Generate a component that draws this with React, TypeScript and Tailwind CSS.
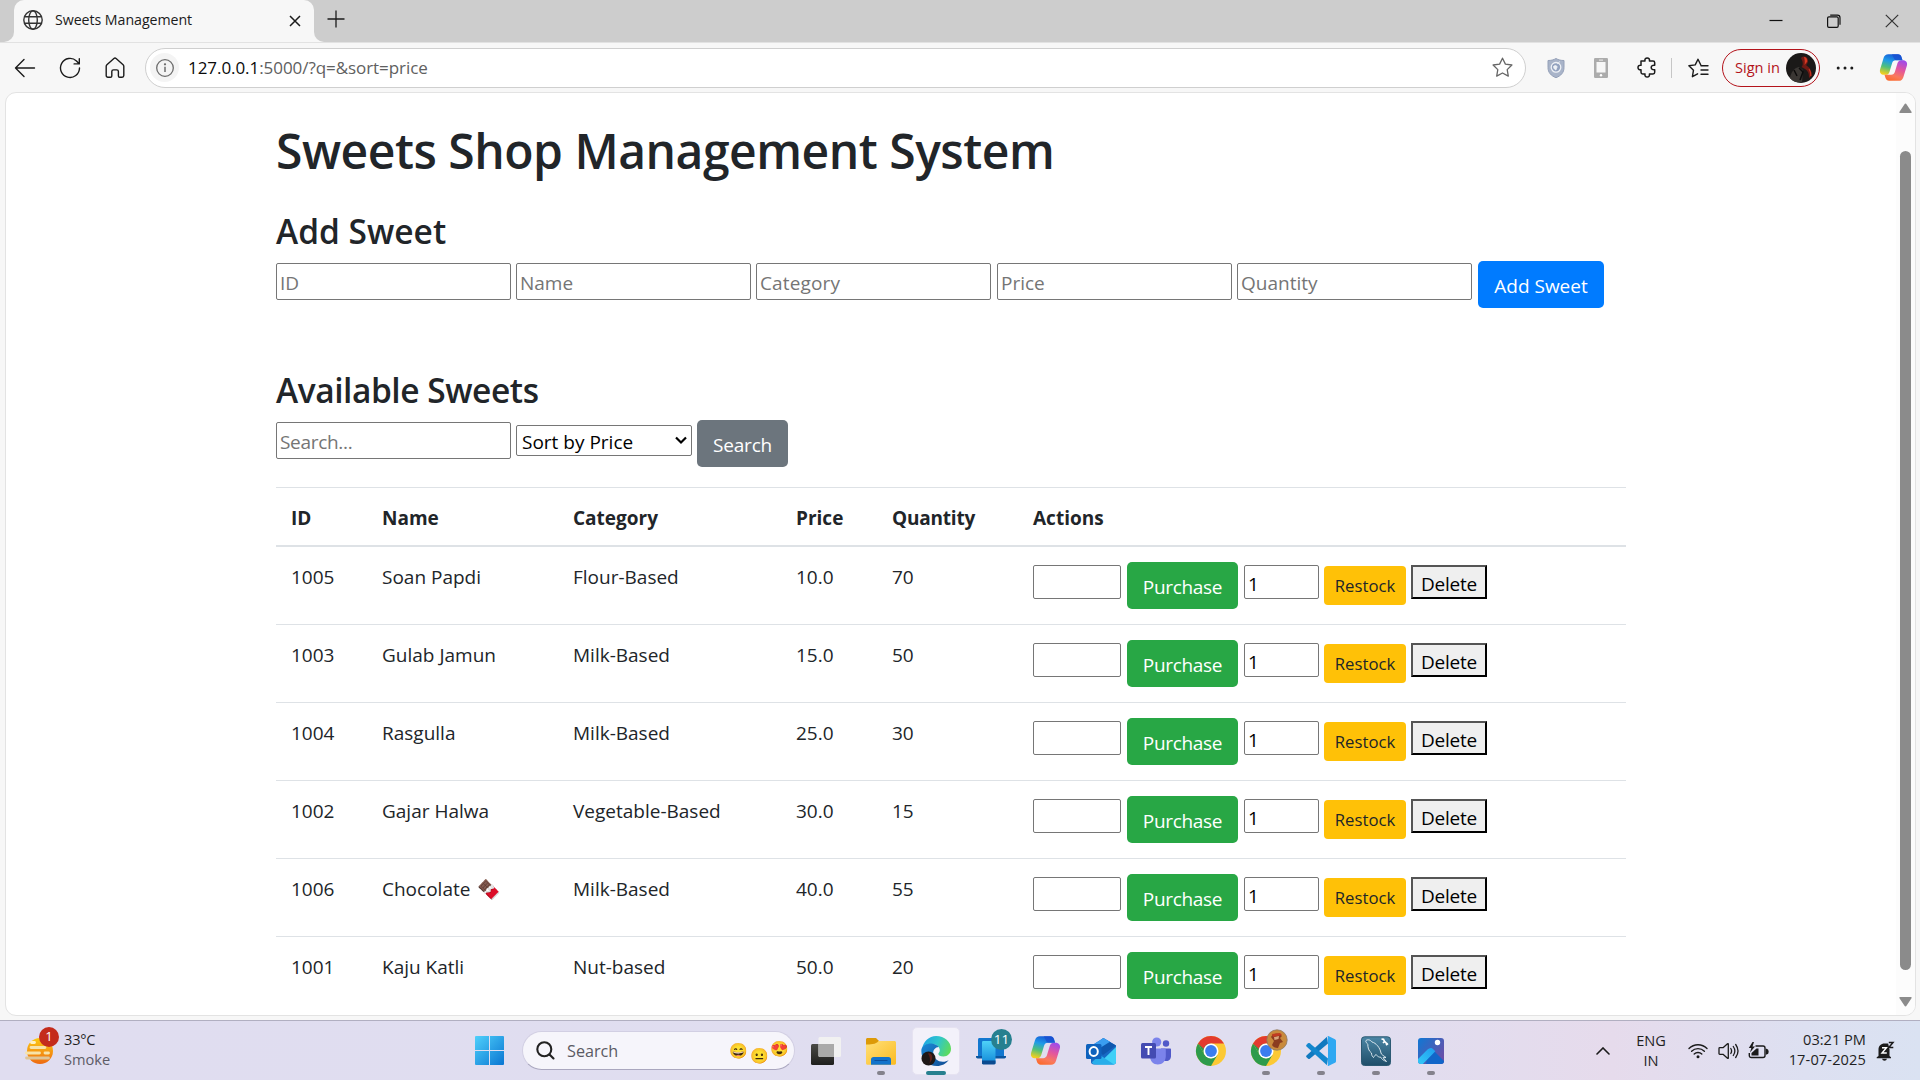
import type { ReactNode } from 'react';

type Sweet = { id: string; name: string; emoji?: string; category: string; price: string; quantity: string };

const SWEETS: Sweet[] = [
  { id: '1005', name: 'Soan Papdi', category: 'Flour-Based', price: '10.0', quantity: '70' },
  { id: '1003', name: 'Gulab Jamun', category: 'Milk-Based', price: '15.0', quantity: '50' },
  { id: '1004', name: 'Rasgulla', category: 'Milk-Based', price: '25.0', quantity: '30' },
  { id: '1002', name: 'Gajar Halwa', category: 'Vegetable-Based', price: '30.0', quantity: '15' },
  { id: '1006', name: 'Chocolate', emoji: '🍫', category: 'Milk-Based', price: '40.0', quantity: '55' },
  { id: '1001', name: 'Kaju Katli', category: 'Nut-based', price: '50.0', quantity: '20' },
];

const COLS = 'grid grid-cols-[92px_190px_223px_96px_141px_1fr] pl-[15px]';

/* ---------- shared drawings ---------- */

function Copilot({ size, id }: { size: number; id: string }) {
  const d =
    'M9 1.2h9.3c1.7 0 2.9 1 3.4 2.6l1 3.3h-6.5c-1.9 0-3 1-3.5 2.6l-2.6 8.6c-.6 1.8-1.8 2.8-3.6 2.8H5c-3.2 0-4.8-2.3-3.9-5.4L4.5 4.7C5.2 2.3 6.7 1.2 9 1.2z';
  return (
    <svg width={size} height={size} viewBox="0 0 28 28">
      <defs>
        <linearGradient id={id + 'a'} x1="0.6" y1="0" x2="0.3" y2="1">
          <stop offset="0" stopColor="#1659d6" />
          <stop offset="0.35" stopColor="#1f9be8" />
          <stop offset="0.65" stopColor="#4fc07a" />
          <stop offset="1" stopColor="#f5cf1d" />
        </linearGradient>
        <linearGradient id={id + 'b'} x1="0.3" y1="1" x2="0.7" y2="0">
          <stop offset="0" stopColor="#a14be8" />
          <stop offset="0.4" stopColor="#e2559f" />
          <stop offset="0.75" stopColor="#fa7a5c" />
          <stop offset="1" stopColor="#fb6b2f" />
        </linearGradient>
      </defs>
      <path d={d} fill={`url(#${id}a)`} />
      <path d={d} fill={`url(#${id}b)`} transform="rotate(180 14 14)" />
      <path d="M12.5 1.2h5.8c1.7 0 2.900 1 3.400 2.600l1 3.300h-5.400c-1.600 0-2.600-.8-3-2.300z" fill="#1a4fd0" opacity="0.75" />
    </svg>
  );
}

function Avatar({ size }: { size: number }) {
  return (
    <svg width={size} height={size} viewBox="0 0 30 30">
      <circle cx="15" cy="15" r="15" fill="#1b1918" />
      <path d="M4 25c1-6 4-10 9-11l4 3-1 12.5C11 30 6.5 28.5 4 25z" fill="#3a3633" />
      <path d="M15 5c2.500-2.500 6-1.500 6.800 1.500.5 3-.5 4.500-1.800 5.500l3.500 3c2 3 2.500 6 2 8l-2.500 2c0-5-1-7-4-9l-3.500-2c2-2 1.500-5-.5-9z" fill="#6f1a14" />
      <path d="M18 4c2 0 3.5 2 3.3 4.500L18.500 12c.5-3 .3-5-.5-8z" fill="#d63822" />
      <path d="M23 16c1.500 2 2 4.500 1.800 7" stroke="#c5301f" strokeWidth="1.200" fill="none" />
      <path d="M13 15l4 4-3 8M8 17l3 6" stroke="#0c0b0b" strokeWidth="1.500" fill="none" />
    </svg>
  );
}

/* ---------- browser chrome ---------- */

function TitleBar() {
  return (
    <div className="flex h-[42px] shrink-0 bg-[#cdcdcd]">
      <div className="w-[14px] bg-[#f7f7f7]">
        <div className="h-full rounded-br-[10px] bg-[#cdcdcd]" />
      </div>
      <div className="flex w-[300px] items-center rounded-t-[10px] bg-[#f7f7f7] pr-[13px] pb-[2px] pl-[9px]">
        <svg width="20" height="20" viewBox="0 0 20 20" fill="none" stroke="#333" strokeWidth="1.4">
          <circle cx="10" cy="10" r="9.2" />
          <ellipse cx="10" cy="10" rx="4.3" ry="9.2" />
          <path d="M1.700 6.700h16.600M1.700 13.300h16.600" />
        </svg>
        <span className="ml-[12px] text-[14.2px] tracking-[-0.050px] text-[#1b1b1b]">Sweets Management</span>
        <svg className="mt-px ml-auto" width="12" height="12" viewBox="0 0 12 12" stroke="#1b1b1b" strokeWidth="1.5">
          <path d="M1 1l10 10M11 1L1 11" />
        </svg>
      </div>
      <div className="w-[10px] bg-[#f7f7f7]">
        <div className="h-full rounded-bl-[10px] bg-[#cdcdcd]" />
      </div>
      <svg className="mt-[10px] ml-[3px]" width="18" height="18" viewBox="0 0 18 18" stroke="#1b1b1b" strokeWidth="1.3">
        <path d="M9 .5v17M.5 9h17" />
      </svg>
      <div className="ml-auto flex items-start pt-[14px] pr-[21px]">
        <svg width="14" height="14" viewBox="0 0 14 14" stroke="#111" strokeWidth="1.2">
          <path d="M.5 6.500h13" />
        </svg>
        <svg className="ml-[44px]" width="14" height="14" viewBox="0 0 14 14" fill="none" stroke="#111" strokeWidth="1.2">
          <rect x="0.6" y="2.800" width="10.600" height="10.600" rx="1.300" />
          <path d="M3.200 1.200h7.200a2.600 2.600 0 0 1 2.600 2.600v7" />
        </svg>
        <svg className="ml-[44px]" width="14" height="14" viewBox="0 0 14 14" stroke="#333" strokeWidth="1.2">
          <path d="M.8 .8l12.400 12.400M13.200 .8L.8 13.200" />
        </svg>
      </div>
    </div>
  );
}

function Toolbar() {
  return (
    <div className="flex h-[50px] shrink-0 items-center border-t border-[#e2e2e2] bg-[#f7f7f7] pl-[14px]">
      <svg width="22" height="22" viewBox="0 0 22 22" fill="none" stroke="#1b1b1b" strokeWidth="1.4" strokeLinecap="round" strokeLinejoin="round">
        <path d="M20.500 11H1.500M10 2.500L1.500 11l8.500 8.500" />
      </svg>
      <svg className="ml-[23px]" width="22" height="22" viewBox="0 0 22 22" fill="none" stroke="#1b1b1b" strokeWidth="1.4" strokeLinecap="round" strokeLinejoin="round">
        <path d="M20.500 11a9.500 9.500 0 1 1-3-7l2.600 2.700M20.300 1.700v5.200h-5.200" />
      </svg>
      <svg className="ml-[24px]" width="20" height="22" viewBox="0 0 20 22" fill="none" stroke="#1b1b1b" strokeWidth="1.4" strokeLinejoin="round">
        <path d="M1.200 9.200c0-.6.3-1.100.7-1.500l7-6.200c.7-.6 1.500-.6 2.200 0l7 6.200c.4.4.7.9.7 1.500v9.400c0 1-.7 1.700-1.700 1.700h-2.400c-.8 0-1.300-.5-1.300-1.300v-4.400c0-1-.7-1.700-1.700-1.700H8.500c-1 0-1.700.7-1.700 1.700V19c0 .8-.5 1.300-1.300 1.300H2.900c-1 0-1.700-.7-1.700-1.700z" />
      </svg>
      <div className="ml-[20px] flex h-[40px] w-[1381px] items-center rounded-full border border-[#cfcfcf] bg-white pl-[4px]">
        <div className="flex size-[29px] items-center justify-center rounded-full bg-[#f4f4f4]">
          <svg width="18" height="18" viewBox="0 0 18 18" fill="none" stroke="#6c6c6c" strokeWidth="1.3">
            <circle cx="9" cy="9" r="8.3" />
            <path d="M9 7.800v5.200" strokeWidth="1.5" />
            <circle cx="9" cy="5.300" r="0.500" fill="#6c6c6c" />
          </svg>
        </div>
        <span className="ml-[9px] text-[17px] tracking-[-0.060px] text-[#606060]">
          <span className="text-[#0a0a0a]">127.0.0.1</span>:5000/?q=&amp;sort=price
        </span>
        <svg className="mr-[12px] ml-auto" width="21" height="21" viewBox="0 0 21 21" fill="none" stroke="#666" strokeWidth="1.3" strokeLinejoin="round">
          <path d="M10.500 1.200l2.900 5.900 6.500.9-4.700 4.600 1.100 6.500-5.800-3.100-5.800 3.100 1.100-6.500L1.100 8l6.500-.9z" />
        </svg>
      </div>
      <svg className="ml-[21px]" width="18" height="20" viewBox="0 0 18 20">
        <path d="M9 .5c2.500 1.500 5 2 8 2v7c0 5-3 8.300-8 10.200C4 17.800 1 14.500 1 9.500v-7c3 0 5.500-.5 8-2z" fill="#a9b4c9" stroke="#94a0b8" />
        <circle cx="9" cy="9.300" r="4.800" fill="#93a2bf" stroke="#eef1f6" strokeWidth="1.3" />
        <path d="M6.500 8.500c1.500-1.500 3-1 3.500 0s-1 2-1 3.500c-1.500-.5-2.500-2-2.500-3.500zM10 6l3-2.500" fill="#eef1f6" stroke="#eef1f6" strokeWidth="0.8" />
      </svg>
      <svg className="ml-[29px]" width="14" height="20" viewBox="0 0 14 20">
        <rect width="14" height="20" rx="1.3" fill="#acacac" />
        <rect x="2.5" y="4" width="9" height="10.500" fill="#f7f7f7" />
        <rect x="5" y="1.600" width="4" height="1" fill="#eee" />
        <circle cx="7" cy="17.200" r="1.200" fill="#fff" />
      </svg>
      <svg className="ml-[29px]" width="20" height="21" viewBox="0 0 20 21" fill="none" stroke="#1b1b1b" strokeWidth="1.5" strokeLinejoin="round">
        <path d="M4 4h4c-.5-1.800.6-3 2.200-3s2.700 1.200 2.200 3H16c1 0 1.700.7 1.700 1.700v2.600c-1.800-.3-3.500.4-3.500 2.200s1.700 2.500 3.500 2.200v2.600c0 1-.7 1.700-1.700 1.700h-3.600c.5 1.800-.6 3-2.200 3S7.500 18.800 8 17H5.700C4.700 17 4 16.300 4 15.300V12.700c-1.800.3-3-.6-3-2.200s1.200-2.500 3-2.200z" />
      </svg>
      <div className="ml-[14px] h-[20px] w-px bg-[#c6c6c6]" />
      <svg className="ml-[16px]" width="21" height="20" viewBox="0 0 21 20" fill="none" stroke="#1b1b1b" strokeWidth="1.4" strokeLinejoin="round" strokeLinecap="round">
        <path d="M12.800 7L10 1.200 7.200 6.900.9 7.800l4.600 4.400-1.100 6.500 5.200-2.900M13 7.800h7M13 12h7M13 16.200h7" />
      </svg>
      <div className="ml-[13px] flex h-[38px] w-[98px] items-center rounded-full border-[1.5px] border-[#b3131b] pl-[12px]">
        <span className="w-[51px] text-[14.6px] text-[#b3131b]">Sign in</span>
        <Avatar size={30} />
      </div>
      <svg className="ml-[16px]" width="18" height="4" viewBox="0 0 18 4" fill="#1b1b1b">
        <circle cx="2.2" cy="2" r="1.500" />
        <circle cx="9" cy="2" r="1.500" />
        <circle cx="15.800" cy="2" r="1.500" />
      </svg>
      <div className="ml-[25px]">
        <Copilot size={29} id="bar" />
      </div>
    </div>
  );
}

/* ---------- page ---------- */

function Field({ className, children }: { className: string; children?: ReactNode }) {
  return (
    <div className={'flex shrink-0 items-center rounded-[2px] border border-[#767676] bg-white pt-[3px] pl-[3px] ' + className}>
      {children}
    </div>
  );
}

function Row({ sweet }: { sweet: Sweet }) {
  return (
    <div className={COLS + ' h-[78px] border-b border-[#dee2e6] pt-[15px] leading-[30px] last:border-transparent'}>
      <span>{sweet.id}</span>
      <span className="-ml-px flex">
        {sweet.name}
        {sweet.emoji && <span className="ml-[7px] text-[19px]">{sweet.emoji}</span>}
      </span>
      <span>{sweet.category}</span>
      <span>{sweet.price}</span>
      <span>{sweet.quantity}</span>
      <div className="flex items-start">
        <Field className="mt-[3px] h-[34px] w-[88px]" />
        <div className="ml-[6px] flex h-[47px] w-[111px] items-center justify-center rounded-[5px] bg-[#28a745] pt-[3px] tracking-[-0.3px] text-white">
          Purchase
        </div>
        <Field className="mt-[3px] ml-[6px] h-[34px] w-[75px] text-black">1</Field>
        <div className="mt-[4px] ml-[5px] flex h-[39px] w-[82px] items-center justify-center rounded-[4px] bg-[#ffc107] text-[16.7px]">
          Restock
        </div>
        <div className="mt-[3px] ml-[5px] flex h-[34px] w-[76px] items-center justify-center border-2 border-t-[#555] border-r-black border-b-black border-l-[#555] bg-[#efefef] pt-[3px] tracking-[-0.2px] text-black">
          Delete
        </div>
      </div>
    </div>
  );
}

function Page() {
  return (
    <div className="h-full w-[1620px] pt-[28px] pl-[270px] text-[19px] text-[#212529]">
      <h1 className="h-[60px] text-[48px] leading-[60px] font-[550] tracking-[-0.480px] whitespace-nowrap">Sweets Shop Management System</h1>
      <h2 className="mt-[29px] h-[41px] text-[33.5px] leading-[42px] font-[550]">Add Sweet</h2>
      <div className="mt-[10px] flex h-[47px] items-start text-[#757575]">
        <Field className="mt-[2px] h-[37px] w-[235px]">ID</Field>
        <Field className="mt-[2px] ml-[5px] h-[37px] w-[235px]">Name</Field>
        <Field className="mt-[2px] ml-[5px] h-[37px] w-[235px] tracking-[0.150px]">Category</Field>
        <Field className="mt-[2px] ml-[6px] h-[37px] w-[235px]">Price</Field>
        <Field className="mt-[2px] ml-[5px] h-[37px] w-[235px]">Quantity</Field>
        <div className="ml-[6px] flex h-[47px] w-[126px] items-center justify-center rounded-[5px] bg-[#007bff] pt-[3px] text-white">Add Sweet</div>
      </div>
      <h2 className="mt-[61px] h-[41px] text-[33.5px] leading-[42px] font-[550] tracking-[-0.450px]">Available Sweets</h2>
      <div className="mt-[10px] flex h-[47px] items-start text-[#757575]">
        <Field className="mt-[2px] h-[37px] w-[235px] tracking-[-0.3px]">Search...</Field>
        <div className="mt-[5px] ml-[5px] flex h-[31px] w-[176px] items-center rounded-[2px] border border-[#767676] bg-white pt-[3px] pr-[4px] pl-[5px] text-black">
          Sort by Price
          <svg className="mb-[3px] ml-auto" width="12" height="9" viewBox="0 0 12 9" fill="none" stroke="#000" strokeWidth="2.2">
            <path d="M1 1.500l5 5 5-5" />
          </svg>
        </div>
        <div className="ml-[5px] flex h-[47px] w-[91px] items-center justify-center rounded-[5px] bg-[#6c757d] pt-[3px] tracking-[-0.2px] text-white">Search</div>
      </div>
      <div className="mt-[20px]">
        <div className={COLS + ' h-[60px] items-center border-t border-b-2 border-[#dee2e6] pt-[4px] font-bold'}>
          <span>ID</span>
          <span className="-ml-px">Name</span>
          <span>Category</span>
          <span>Price</span>
          <span className="tracking-[-0.2px]">Quantity</span>
          <span>Actions</span>
        </div>
        <div>
          {SWEETS.map((s) => (
            <Row key={s.id} sweet={s} />
          ))}
        </div>
      </div>
    </div>
  );
}

function Scrollbar() {
  return (
    <div className="ml-auto flex w-[19px] flex-col items-center bg-[#fcfcfc] pt-[10px] pb-[8px]">
      <svg width="13" height="11" viewBox="0 0 13 11" fill="#8b8b8b">
        <path d="M5.500 1.200c.5-.8 1.500-.8 2 0l5 7.500c.4.7 0 1.300-.7 1.300H1.200C.5 10 .1 9.400.5 8.700z" />
      </svg>
      <div className="mt-[37px] h-[819px] w-[11px] rounded-full bg-[#8b8b8b]" />
      <svg className="mt-auto" width="13" height="11" viewBox="0 0 13 11" fill="#8b8b8b">
        <path d="M5.500 9.800c.5.8 1.500.8 2 0l5-7.500c.4-.7 0-1.300-.7-1.300H1.200C.5 1 .1 1.600.5 2.300z" />
      </svg>
    </div>
  );
}

/* ---------- taskbar icons ---------- */

const TaskView = () => (
  <svg width="30" height="30" viewBox="0 0 30 30">
    <defs>
      <linearGradient id="tvd" x1="0" y1="0" x2="0" y2="1">
        <stop offset="0" stopColor="#4a4a46" />
        <stop offset="1" stopColor="#1f1f1d" />
      </linearGradient>
    </defs>
    <rect x="0" y="8" width="23" height="21" rx="1.5" fill="url(#tvd)" />
    <rect x="7.5" y="1" width="22.5" height="20" rx="1.5" fill="#f1f1f1" />
    <path d="M7.500 8H23v13H9a1.500 1.500 0 0 1-1.500-1.500z" fill="#aaaaa9" />
  </svg>
);

const Explorer = () => (
  <svg width="30" height="30" viewBox="0 0 30 30">
    <defs>
      <linearGradient id="exf" x1="0" y1="0" x2="1" y2="1">
        <stop offset="0" stopColor="#ffe07a" />
        <stop offset="1" stopColor="#fbbb20" />
      </linearGradient>
    </defs>
    <path d="M0 3.500C0 2.700.7 2 1.500 2H9c1 0 1.500.3 2 1l2 2v4H0z" fill="#dd9a08" />
    <path d="M0 8.500C4 8.500 10 8.500 12.500 5H28.500c.8 0 1.500.7 1.500 1.500v20.700c0 .8-.7 1.500-1.500 1.500h-27C.7 28.700 0 28 0 27.200z" fill="url(#exf)" />
    <path d="M5 28.700v-5.200c0-1.600 1-2.600 2.600-2.600h14.800c1.600 0 2.600 1 2.600 2.600v5.200z" fill="#1273cb" />
    <path d="M8.500 24.500h13" stroke="#0b4f9c" strokeWidth="1" />
  </svg>
);

const Edge = () => (
  <svg width="30" height="30" viewBox="0 0 30 30">
    <defs>
      <linearGradient id="edt" x1="0" y1="0.3" x2="1" y2="0.6">
        <stop offset="0" stopColor="#1fa4e4" />
        <stop offset="0.5" stopColor="#2fc6cc" />
        <stop offset="1" stopColor="#5fdc5a" />
      </linearGradient>
      <linearGradient id="edb" x1="0" y1="0" x2="1" y2="1">
        <stop offset="0" stopColor="#1b8ad8" />
        <stop offset="1" stopColor="#114b92" />
      </linearGradient>
    </defs>
    <path d="M1 13.500C2 5.500 8 0 15.200 0 23.500 0 30 5.800 30 12.800c0 4.700-3.400 7.700-7.400 7.700-3.600 0-5.300-1.500-5.300-2.600 0-1 1.500-1.400 1.500-4 0-3-3.300-6-8.300-6-4 0-7.500 2-9.500 5.600z" fill="url(#edt)" />
    <path d="M.5 13C2 9.500 6 7.300 10.500 7.500c3.500.2 6 1.700 7.300 3.500-3.600.2-5.600 3-5.600 6 0 5 4.500 8.800 9.500 8.800 2.500 0 4.500-.9 6-1.800-2.500 3.800-7 6-11.700 6C6.500 30-.8 22.500.5 13z" fill="url(#edb)" />
    <circle cx="7.5" cy="22.500" r="7" fill="#1e1817" />
    <path d="M7 17.500c3-1 5 2 4 6l-2.500 4c1-4 .5-7-1.500-10z" fill="#5e1f19" />
  </svg>
);

const PhoneLink = () => (
  <svg width="30" height="30" viewBox="0 0 30 30">
    <defs>
      <linearGradient id="plp" x1="0" y1="0" x2="0" y2="1">
        <stop offset="0" stopColor="#4fd2f8" />
        <stop offset="1" stopColor="#1188d8" />
      </linearGradient>
    </defs>
    <path d="M2 3.500C2 2.600 2.600 2 3.500 2H26.500c.9 0 1.500.6 1.500 1.500V21H2z" fill="#1277cf" />
    <path d="M0 20h30v.8c0 1-.7 1.700-1.700 1.700H1.700C.7 22.500 0 21.800 0 20.800z" fill="#0c569f" />
    <rect x="6" y="5" width="13.5" height="23" rx="1.2" fill="url(#plp)" />
    <path d="M6 24.500h13.500v2.700c0 .7-.5 1.200-1.200 1.200H7.200c-.7 0-1.200-.5-1.200-1.200z" fill="#0b4b90" />
  </svg>
);

const Outlook = () => (
  <svg width="30" height="30" viewBox="0 0 30 30">
    <path d="M5 10L17.500 2 30 9.500V26c0 1.500-1 2.400-2.400 2.400H8C6 28.400 5 27.400 5 26z" fill="#1769c4" />
    <path d="M17 2.300L30 9.500 17 19 8 12z" fill="#0f57ae" />
    <path d="M17.500 2L24 5.700 9 15 5 10z" fill="#3a9df0" />
    <path d="M30 11v15c0 1.500-1 2.400-2.400 2.400H12L30 11z" fill="#3fd0f7" />
    <path d="M14 19l14 9.400H9c-1.800 0-3-1-3-2.400z" fill="#28aeea" />
    <rect x="0" y="8" width="15.5" height="15" rx="1.5" fill="#0f62bd" />
    <ellipse cx="7.700" cy="15.500" rx="4.100" ry="4.500" fill="none" stroke="#fff" strokeWidth="2" />
  </svg>
);

const Teams = () => (
  <svg width="30" height="30" viewBox="0 0 30 30">
    <circle cx="25" cy="7.500" r="3.200" fill="#5059c9" />
    <path d="M20 12.500h9c.6 0 1 .4 1 1V20c0 3-2 5-4.700 5S20 23 20 20z" fill="#5059c9" />
    <circle cx="15.700" cy="6" r="4.600" fill="#7b83eb" />
    <path d="M9 12.500h14.500c.7 0 1.300.5 1.300 1.300V20c0 5-3.500 8.500-8 8.500S9 25 9 20z" fill="#7b83eb" />
    <rect x="0" y="7" width="15" height="15.500" rx="1.5" fill="#444bb2" />
    <path d="M4 11h7M7.500 11v8" stroke="#fff" strokeWidth="1.900" />
  </svg>
);

const Chrome = ({ avatar }: { avatar?: boolean }) => (
  <svg width="30" height="30" viewBox="0 0 30 30" overflow="visible">
    <circle cx="15" cy="15" r="15" fill="#fcc934" />
    <path d="M2 7.500A15 15 0 0 0 15 30l6.500-11.200L15 22.500 8.500 18.800z" fill="#2d9b4b" />
    <path d="M2 7.500L8.500 18.800 15 7.500z" fill="#2d9b4b" />
    <path d="M2 7.500a15 15 0 0 1 26 0H15c-4 0-6.500 3-7 5.500z" fill="#e33b2e" />
    <circle cx="15" cy="15" r="7.500" fill="#fff" />
    <circle cx="15" cy="15" r="5.900" fill="#3b7def" />
    {avatar && (
      <g>
        <circle cx="26" cy="4" r="10.200" fill="#c98a3c" stroke="#8d7a62" strokeWidth="0.8" />
        <path d="M20 1c2-4 8-5 11-1l-2 2 3 4-3 1-2 5c-3 0-5-1-6-3l2-4z" fill="#8b3d20" />
        <path d="M23 1l5-1-.5 3-4 1z" fill="#d9a67c" />
        <path d="M21-2l8-1 2 2-9 2z" fill="#c23b22" />
      </g>
    )}
  </svg>
);

const VSCode = () => (
  <svg width="30" height="30" viewBox="0 0 30 30">
    <path d="M22 7.500L3.800 22.800c-.5.4-1.100.4-1.600 0L.5 21.200c-.5-.5-.5-1.300 0-1.800L21 .8z" fill="#1179bf" />
    <path d="M22 22.500L3.800 7.200c-.5-.4-1.100-.4-1.600 0L.5 8.800c-.5.5-.5 1.300 0 1.800L21 29.200z" fill="#1387ce" />
    <path d="M21 .5c.4-.6 1.200-.6 1.800-.3l6.200 3c.6.3 1 .9 1 1.600v20.400c0 .7-.4 1.300-1 1.600l-6.200 3c-.6.3-1.400.2-1.800-.3.7.4 1-.1 1-.8V1.300c0-.7-.3-1.200-1-.8z" fill="#2fa8f2" />
  </svg>
);

const MySql = () => (
  <svg width="30" height="30" viewBox="0 0 30 30">
    <defs>
      <linearGradient id="myb" x1="0" y1="0" x2="0" y2="1">
        <stop offset="0" stopColor="#4b86a5" />
        <stop offset="1" stopColor="#1f4e69" />
      </linearGradient>
    </defs>
    <rect x="0.5" y="0.800" width="29" height="28.700" rx="3" fill="url(#myb)" stroke="#2c5a73" />
    <path
      d="M5 4.500c2-1.500 4.500-.5 6 1.500 4 1 8 5.500 9 11 .6 2 2.500 2.500 5 4.500l-3 .2 3.500 3.800c-3-1-5-2.500-6-4.500-1.500.5-2.500-.5-4-2-1-1-2 1-3 2.500-1.500-1-2-3-2-4.500C7.500 15 6.800 11 6.800 8.500 6.500 7 4 6.500 5 4.500z"
      fill="none"
      stroke="#e7f0f5"
      strokeWidth="0.9"
    />
    <path d="M20.500 3l2 .3 1 2 3 3M22 7l2-2M25 9l2-1.500" stroke="#fff" strokeWidth="1.7" fill="none" />
  </svg>
);

const Photos = () => (
  <svg width="30" height="30" viewBox="0 0 30 30">
    <defs>
      <linearGradient id="phb" x1="0" y1="0" x2="1" y2="0.7">
        <stop offset="0" stopColor="#0f78d4" />
        <stop offset="1" stopColor="#6a4fa8" />
      </linearGradient>
      <linearGradient id="phm" x1="0" y1="1" x2="1" y2="0">
        <stop offset="0" stopColor="#36d0f8" />
        <stop offset="1" stopColor="#1f9df0" />
      </linearGradient>
      <clipPath id="phc">
        <rect x="2" y="2" width="26" height="26" rx="3" />
      </clipPath>
    </defs>
    <g clipPath="url(#phc)">
      <rect x="2" y="2" width="26" height="26" fill="url(#phb)" />
      <path d="M12 14c1.500-1.800 3.500-1.800 5 0L30 27v2H10z" fill="#1166c9" />
      <path d="M-1 26l12.500-12.500c2-2 4.500-2 6 0l1.800 1.700L5 30z" fill="url(#phm)" />
    </g>
    <circle cx="21.500" cy="6.500" r="2.700" fill="#fff" />
  </svg>
);

function TaskItem({ children, running, badge }: { children: ReactNode; running?: boolean; badge?: string }) {
  return (
    <div className="relative flex h-[48px] w-[55px] items-center justify-center">
      {children}
      {running && <span className="absolute bottom-0 left-1/2 h-[4px] w-[8px] -translate-x-1/2 rounded-full bg-[#84828c]" />}
      {badge && (
        <span className="absolute top-[2px] right-[6px] flex size-[21px] items-center justify-center rounded-full bg-[#27808f] text-[13.5px] text-white">
          {badge}
        </span>
      )}
    </div>
  );
}

function Taskbar() {
  return (
    <div className="flex h-[60px] shrink-0 items-center overflow-hidden border-t border-[#b1afc1] bg-[linear-gradient(90deg,#e0ddf0_0%,#e0def0_70%,#e6dbec_84%,#dde0f1_94%,#dae2f2_100%)] text-[14.6px] whitespace-nowrap text-[#1f1f1f]">
      <div className="relative ml-[25px] h-[28px] w-[28px]">
        <svg width="28" height="28" viewBox="0 0 28 28">
          <defs>
            <linearGradient id="sun" x1="0" y1="0" x2="0" y2="1">
              <stop offset="0" stopColor="#fccb12" />
              <stop offset="1" stopColor="#ee6a12" />
            </linearGradient>
          </defs>
          <circle cx="15" cy="14" r="13" fill="url(#sun)" />
          <g stroke="#f7e3a8" strokeWidth="2.8" strokeLinecap="round">
            <path d="M6 10.500h14M1.500 16h13M20 16h3.500" />
            <path d="M1.500 21h22" stroke="#dfc597" />
            <path d="M6.500 5.500h3" stroke="#fff2c0" />
          </g>
        </svg>
        <span className="absolute -top-[10px] left-[14px] flex size-[20px] items-center justify-center rounded-full bg-[#c42b1c] text-[13px] text-white">1</span>
      </div>
      <div className="mb-[4px] ml-[11px] w-[411px] leading-[20px]">
        <div className="tracking-[-0.2px]">33°C</div>
        <div className="text-[#5d5b66]">Smoke</div>
      </div>
      <svg width="29" height="29" viewBox="0 0 29 29">
        <defs>
          <linearGradient id="win" x1="0" y1="0" x2="1" y2="1">
            <stop offset="0" stopColor="#4fd0fb" />
            <stop offset="1" stopColor="#0a76d2" />
          </linearGradient>
        </defs>
        <path d="M1 0h13v14H0V1a1 1 0 0 1 1-1zM15 0h13a1 1 0 0 1 1 1v13H15zM0 15h14v14H1a1 1 0 0 1-1-1zM15 15h14v13a1 1 0 0 1-1 1H15z" fill="url(#win)" />
      </svg>
      <div className="ml-[18px] flex h-[39px] w-[273px] items-center rounded-full border border-[#d2cfe3] border-b-[#aaa7bf] bg-[#f6f5fb] pl-[13px]">
        <svg width="19" height="19" viewBox="0 0 19 19" fill="none" stroke="#222" strokeWidth="2.1" strokeLinecap="round">
          <circle cx="8.3" cy="8.300" r="7" />
          <path d="M13.500 13.500l4 4" />
        </svg>
        <span className="ml-[12px] w-[162px] pt-px text-[16.2px]  text-[#5b5a63]">Search</span>
        <span className="flex pt-[3px] text-[15px] leading-[18px]">
          <span className="w-[20.5px]">😄</span>
          <span className="w-[20.5px] pt-[5px]">😐</span>
          <span className="-mt-[2px] w-[20px]">😍</span>
        </span>
      </div>
      <div className="ml-[3px] flex items-center">
        <TaskItem><TaskView /></TaskItem>
        <TaskItem running><Explorer /></TaskItem>
        <div className="relative mx-[3.5px] flex size-[48px] items-center justify-center rounded-[5px] border border-[#e6e2f1] bg-[#f3f1fa]">
          <Edge />
          <span className="absolute bottom-[-1px] left-1/2 h-[4px] w-[20px] -translate-x-1/2 rounded-full bg-[#27808f]" />
        </div>
        <TaskItem badge="11"><PhoneLink /></TaskItem>
        <TaskItem><Copilot size={31} id="task" /></TaskItem>
        <TaskItem><Outlook /></TaskItem>
        <TaskItem><Teams /></TaskItem>
        <TaskItem><Chrome /></TaskItem>
        <TaskItem running><Chrome avatar /></TaskItem>
        <TaskItem running><VSCode /></TaskItem>
        <TaskItem running><MySql /></TaskItem>
        <TaskItem running><Photos /></TaskItem>
      </div>
      <svg className="ml-auto" width="14" height="8" viewBox="0 0 14 8" fill="none" stroke="#1b1b1b" strokeWidth="1.6" strokeLinecap="round">
        <path d="M1 7l6-6 6 6" />
      </svg>
      <div className="mb-[2px] ml-[21px] w-[40px] text-center leading-[20px]">
        <div>ENG</div>
        <div>IN</div>
      </div>
      <svg className="ml-[17px]" width="20" height="16" viewBox="0 0 20 16" fill="none" stroke="#1b1b1b" strokeWidth="1.4" strokeLinecap="round">
        <path d="M1 5.500a12.700 12.700 0 0 1 18 0M3.600 8.300a9 9 0 0 1 12.800 0M6.200 11a5.400 5.400 0 0 1 7.600 0" />
        <circle cx="10" cy="13.700" r="1.500" fill="#1b1b1b" stroke="none" />
      </svg>
      <svg className="ml-[10px]" width="21" height="18" viewBox="0 0 21 18" fill="none" stroke="#1b1b1b" strokeWidth="1.3" strokeLinecap="round" strokeLinejoin="round">
        <path d="M1 6.500c0-.5.3-.8.8-.8H5l4.500-4c.4-.3.8-.1.8.4v13.800c0 .5-.4.700-.8.4l-4.500-4H1.800c-.5 0-.8-.3-.8-.8zM12.800 6.500c1 1.600 1 3.400 0 5M15.300 4.500c2 2.900 2 6.100 0 9M17.700 2.500c3 4.200 3 8.800 0 13" />
      </svg>
      <svg className="ml-[9px]" width="21" height="18" viewBox="0 0 21 18" fill="none" stroke="#1b1b1b" strokeWidth="1.4">
        <path d="M7.500 4H15c1.300 0 2 .8 2 2v7.500c0 1.200-.7 2-2 2H3.300c-1.300 0-2-.8-2-2V11" />
        <path d="M18.500 7.500c1 .2 1.500.8 1.500 2.200s-.5 2-1.500 2.200z" fill="#1b1b1b" />
        <path d="M3.500 13.500V11l5-4.500h2v7z" fill="#1b1b1b" stroke="none" />
        <path d="M4.500 0L.8 6h2.500L2 10.500 7 4.500H4.500L6 0z" fill="#1b1b1b" stroke="none" />
      </svg>
      <div className="mb-[4px] ml-[17px] w-[80px] text-right leading-[20px]">
        <div>03:21 PM</div>
        <div className="tracking-[0.12px]">17-07-2025</div>
      </div>
      <svg className="mr-[25px] ml-[10px]" width="19" height="20" viewBox="0 0 19 20">
        <path d="M2.500 15V8.500C2.500 5 5 2.500 8.500 2.500h5V15l1.500 1.300v1H.7v-1z" fill="#1b1b1b" />
        <path d="M6 17.800a2.600 2.600 0 0 0 5 0z" fill="#1b1b1b" />
        <path d="M11.500 0h7v8h-5z" fill="#dce1f2" />
        <path d="M6 6.800h4.500L6 12h4.800" fill="none" stroke="#fff" strokeWidth="1.4" />
        <path d="M12.800 1.500h4.200l-4.200 5h4.500" fill="none" stroke="#1b1b1b" strokeWidth="1.5" />
      </svg>
    </div>
  );
}

export default function App() {
  return (
    <div className="flex h-[1080px] w-[1920px] flex-col overflow-hidden bg-[#f7f7f7] font-['Open_Sans','Noto_Sans',sans-serif]">
      <TitleBar />
      <Toolbar />
      <div className="h-[928px] shrink-0 pr-[4px] pb-[4px] pl-[5px]">
        <div className="flex h-full overflow-hidden rounded-[11px] border border-[#e3e3e3] bg-white">
          <Page />
          <Scrollbar />
        </div>
      </div>
      <Taskbar />
    </div>
  );
}
